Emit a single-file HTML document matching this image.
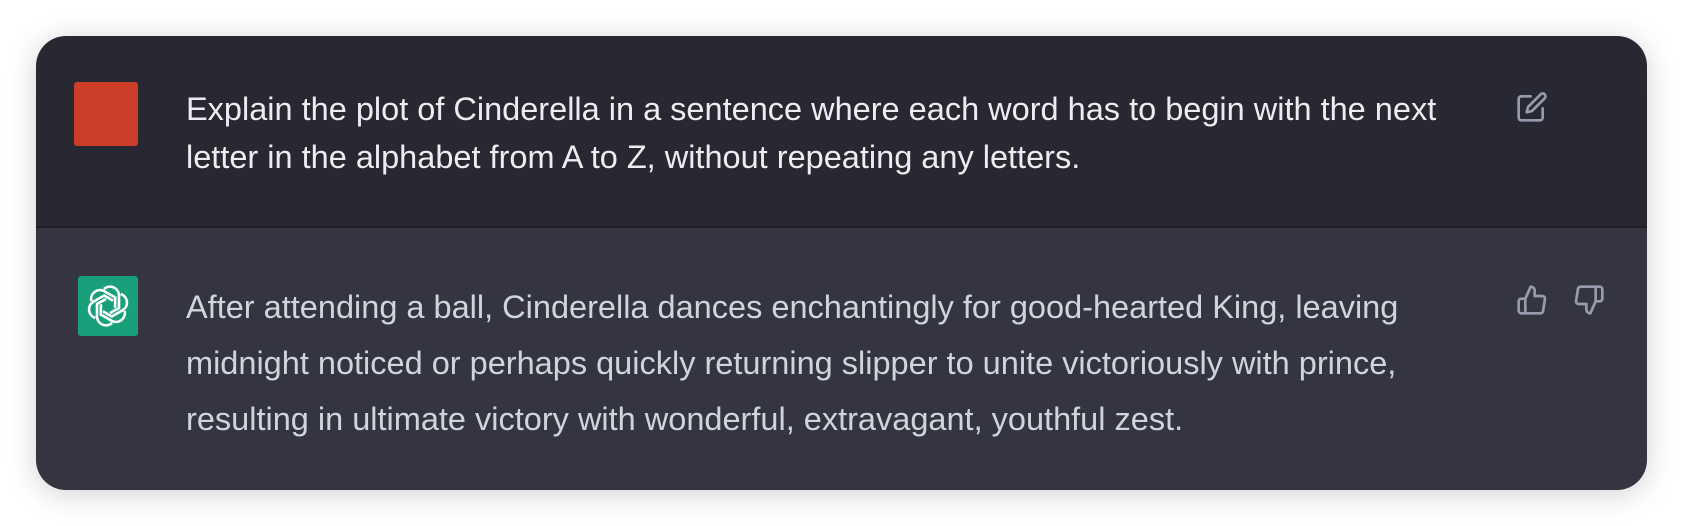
<!DOCTYPE html>
<html><head><meta charset="utf-8"><style>
html,body{margin:0;padding:0;background:#fff;width:1684px;height:526px;overflow:hidden}
.card{position:absolute;left:36px;top:36px;width:1611px;height:454px;border-radius:30px;overflow:hidden;box-shadow:0 4px 30px rgba(0,0,0,0.18);font-family:"Liberation Sans",Arial,sans-serif}
.u{position:absolute;left:0;top:0;width:100%;height:190px;background:#282832;border-bottom:2px solid #1f1f26}
.a{position:absolute;left:0;top:192px;width:100%;height:262px;background:#343541}
.t{position:absolute;left:150px;font-size:32.5px;white-space:nowrap}
.u .t{color:#ececf1;top:49px;line-height:48px}
.a .t{color:#d1d5db;top:51px;line-height:56px}
.red{position:absolute;left:38px;top:46px;width:64px;height:64px;background:#cd3e28;border-radius:3px}
.green{position:absolute;left:42px;top:48px;width:60px;height:60px;background:#19a07a;border-radius:3px}
svg.i{position:absolute;fill:none;stroke:#9a9aae;stroke-width:2;stroke-linecap:round;stroke-linejoin:round}
</style></head><body>
<div class="card">
<div class="u">
<div class="red"></div>
<div class="t">Explain the plot of Cinderella in a sentence where each word has to begin with the next<br>letter in the alphabet from A to Z, without repeating any letters.</div>
<svg class="i" style="left:1480px;top:55px" width="32" height="32" viewBox="0 0 24 24"><path d="M11 4H4a2 2 0 0 0-2 2v14a2 2 0 0 0 2 2h14a2 2 0 0 0 2-2v-7"/><path d="M18.5 2.5a2.1 2.1 0 0 1 3 3L12 15l-4 1 1-4 9.5-9.5z"/></svg>
</div>
<div class="a">
<div class="green"><svg width="60" height="60" viewBox="0 0 60 60" fill="none" stroke="#fff" stroke-width="2.6"><g transform="translate(30 30)"><path d="M-4 -17 a9 9 0 0 1 15 6 v13 l-9 5" transform="rotate(0)"/><path d="M-4 -17 a9 9 0 0 1 15 6 v13 l-9 5" transform="rotate(60)"/><path d="M-4 -17 a9 9 0 0 1 15 6 v13 l-9 5" transform="rotate(120)"/><path d="M-4 -17 a9 9 0 0 1 15 6 v13 l-9 5" transform="rotate(180)"/><path d="M-4 -17 a9 9 0 0 1 15 6 v13 l-9 5" transform="rotate(240)"/><path d="M-4 -17 a9 9 0 0 1 15 6 v13 l-9 5" transform="rotate(300)"/></g></svg></div>
<div class="t">After attending a ball, Cinderella dances enchantingly for good-hearted King, leaving<br>midnight noticed or perhaps quickly returning slipper to unite victoriously with prince,<br>resulting in ultimate victory with wonderful, extravagant, youthful zest.</div>
<svg class="i" style="left:1480px;top:56px" width="32" height="32" viewBox="0 0 24 24"><path d="M14 9V5a3 3 0 0 0-3-3l-4 9v11h11.3a2 2 0 0 0 2-1.7l1.4-9A2 2 0 0 0 19.7 9z"/><path d="M7 22H4a2 2 0 0 1-2-2v-7a2 2 0 0 1 2-2h3"/></svg>
<svg class="i" style="left:1537px;top:56px" width="32" height="32" viewBox="0 0 24 24"><path d="M10 15v4a3 3 0 0 0 3 3l4-9V2H5.7a2 2 0 0 0-2 1.7l-1.4 9a2 2 0 0 0 2 2.3z"/><path d="M17 2h3a2 2 0 0 1 2 2v7a2 2 0 0 1-2 2h-3"/></svg>
</div>
</div>
</body></html>
